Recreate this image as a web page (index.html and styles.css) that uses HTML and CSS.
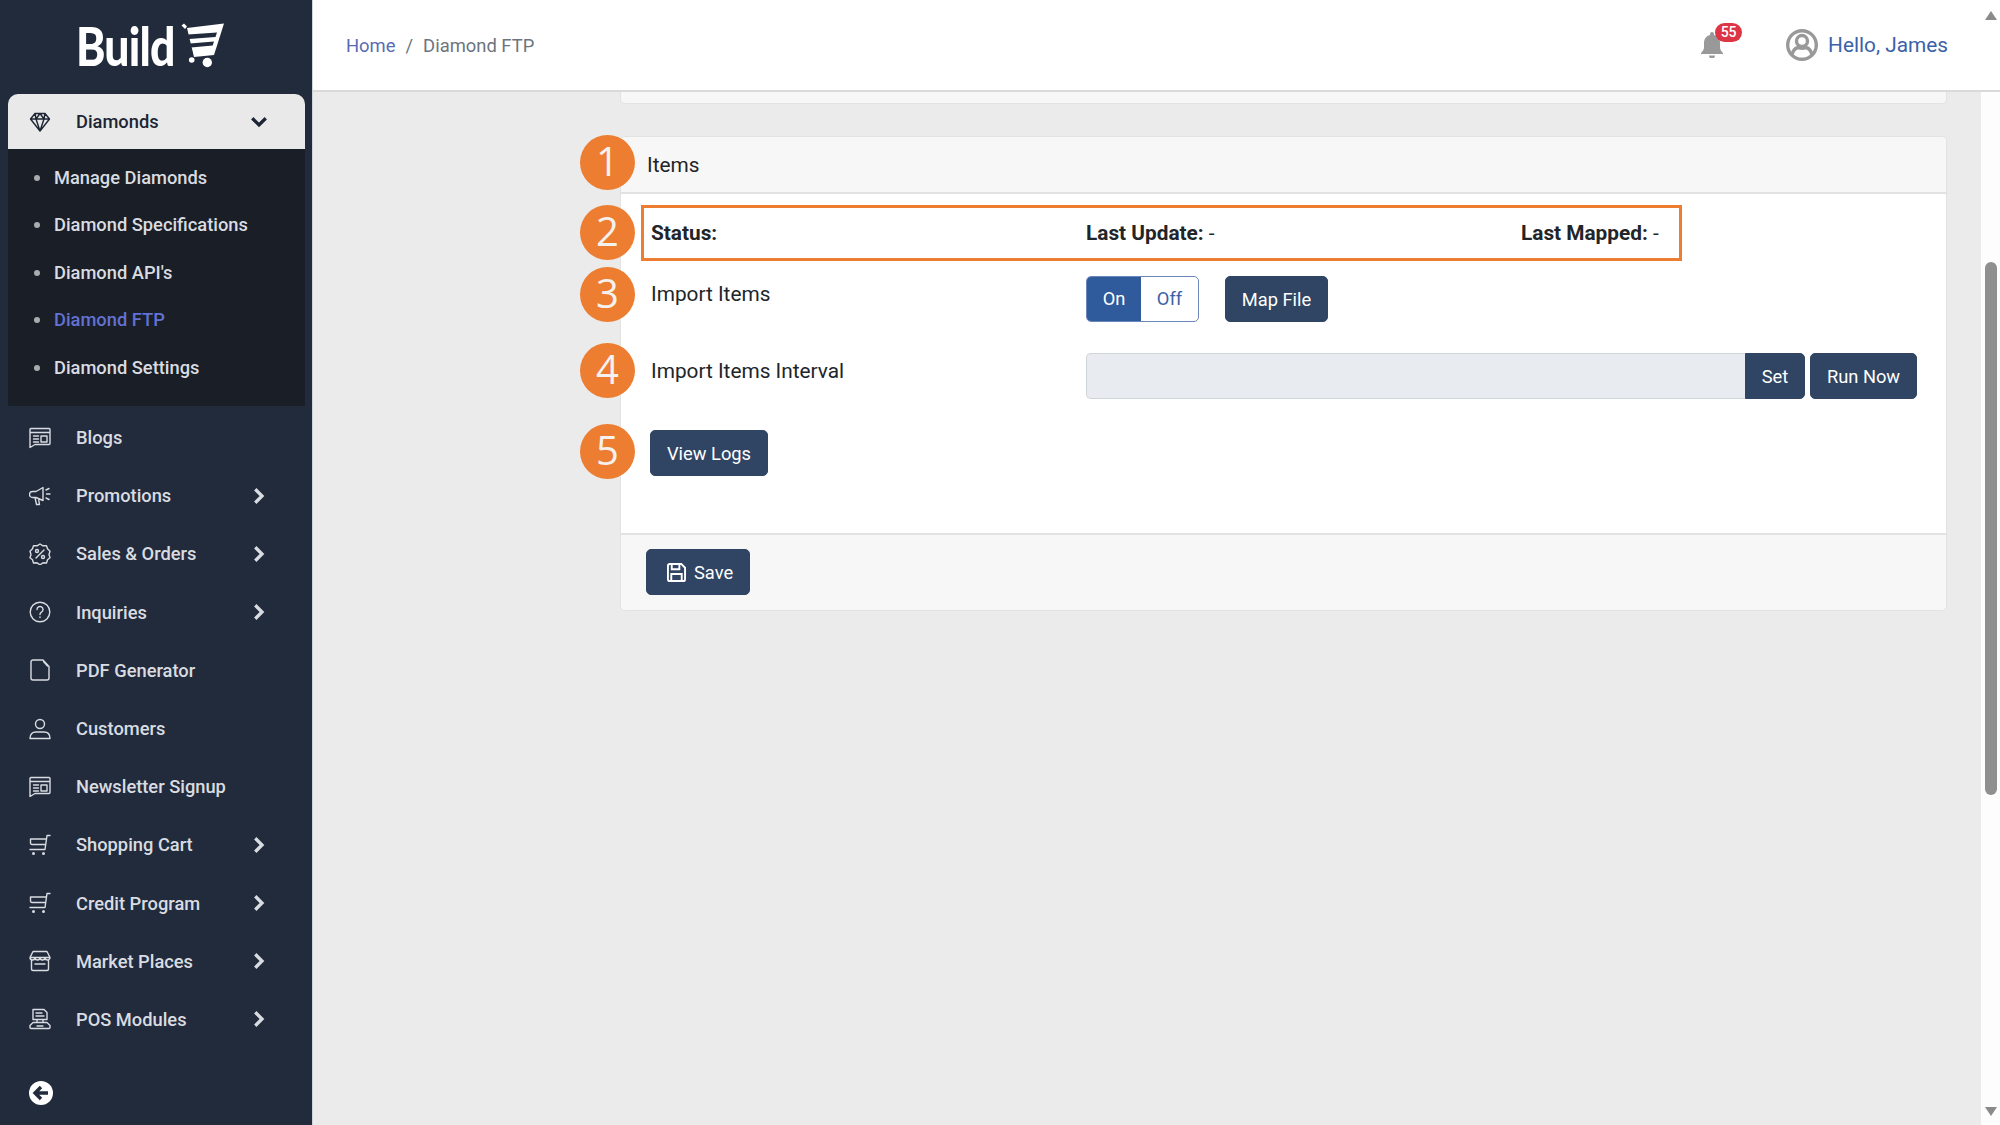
FILE: index.html
```html
<!DOCTYPE html>
<html lang="en">

<head>
  <meta charset="UTF-8">
  <meta name="viewport" content="width=device-width, initial-scale=1.0">
  <title>Diamond FTP</title>
  <link rel="stylesheet" href="styles.css">
</head>

<body>
  <svg class="c-sprite" width="0" height="0" aria-hidden="true">
    <symbol id="i-diamond" viewBox="0 0 22 22">
      <path d="M6 2.500h10l4.500 5.500L11 20 1.500 8z M1.500 8h19 M7 8l4 12 4-12 M6 2.500 7 8l4-5.500L15 8l1-5.500" />
    </symbol>
    <symbol id="i-news" viewBox="0 0 22 22">
      <path d="M1 2.500A1 1 0 0 1 2 1.500h18a1 1 0 0 1 1 1v14a1 1 0 0 1-1 1H6l-5 3z M1 5.500h20 M4.500 9h5 M4.500 12h5 M4.500 15h5 M12 9h6v6h-6z" />
    </symbol>
    <symbol id="i-promo" viewBox="0 0 22 22">
      <path d="M14 2.500 7 6.500H3.500a2.500 2.500 0 0 0 0 6H7l7 3z M6 12.500l1.500 7h3l-1-6 M17 5l3-1.500 M17.500 9H21 M17 13l3 1.500" />
    </symbol>
    <symbol id="i-percent" viewBox="0 0 22 22">
      <path d="M11 1l3 1.800 3.500-.2 1 3.200 2.500 2.500-1 3.200 1 3.200-2.500 2-1 3.300-3.500-.2-3 2-3-2-3.500.2-1-3.300-2.500-2 1-3.200-1-3.200 2.500-2.500 1-3.200 3.500.2z M7 15 15 7" />
      <circle cx="8" cy="8" r="1.500" />
      <circle cx="14" cy="14" r="1.500" />
    </symbol>
    <symbol id="i-help" viewBox="0 0 22 22">
      <circle cx="11" cy="11" r="9.800" />
      <path d="M8 8.500a3 3 0 1 1 4.500 2.600c-1 .6-1.500 1.200-1.500 2.400 M11 16v.5" />
    </symbol>
    <symbol id="i-file" viewBox="0 0 22 22">
      <path d="M2 3a2 2 0 0 1 2-2h10l6 6.500V19a2 2 0 0 1-2 2H4a2 2 0 0 1-2-2z M14.500 2.500l4 4.500" />
    </symbol>
    <symbol id="i-user" viewBox="0 0 22 22">
      <circle cx="11" cy="6" r="4.500" />
      <path d="M1 20.500c0-4 2-6.500 6-6.500h8c4 0 6 2.500 6 6.500z" />
    </symbol>
    <symbol id="i-cart" viewBox="0 0 22 22">
      <path d="M21 1.500h-3L16 15.500H1 M1.500 5h15.500 M16.800 10.500H3A1.500 1.500 0 0 1 1.500 9V5" />
      <circle cx="4.500" cy="19.500" r=".8" />
      <circle cx="14.500" cy="19.500" r=".8" />
    </symbol>
    <symbol id="i-store" viewBox="0 0 22 22">
      <path d="M4 1.500h14l3 6a2.500 2.500 0 0 1-5 0 2.500 2.500 0 0 1-5 0 2.500 2.500 0 0 1-5 0 2.500 2.500 0 0 1-5 0z M1 7.500h20 M2.500 10v9a1.500 1.500 0 0 0 1.500 1.500h14a1.500 1.500 0 0 0 1.500-1.500v-9 M6 14h10" />
    </symbol>
    <symbol id="i-pos" viewBox="0 0 22 22">
      <path d="M4 1.500h11l3 3v7H4z M7 5h6 M7 8h8 M8 11.500v3 M14 11.500v3 M4 14.500h14l3 3v2a1 1 0 0 1-1 1H2a1 1 0 0 1-1-1v-2z M8 18h6" />
    </symbol>
    <symbol id="i-chevron" viewBox="0 0 12 12">
      <path d="M3.500 1.500 8 6l-4.500 4.500" />
    </symbol>
  </svg>

  <div class="l-app">
    <aside class="c-sidebar">
      <a class="c-logo" href="#">
        <span class="c-logo__text">Build</span>
        <svg class="c-logo__cart" viewBox="0 0 46 46" width="46" height="46">
          <path d="M1.500 3.500 4 1.500l3 3-2 2.500z" />
          <path d="M7 6 44 1.500 34 33l-20 2z" />
          <path class="c-logo__cut" d="M8 12.500 37 10.500l-1.500 4.500L9 17z" />
          <path class="c-logo__cut" d="M10 21.500 34 19.500l-1.300 4L11 25.500z" />
          <circle cx="11.700" cy="38" r="2.800" />
          <circle cx="27.300" cy="40.500" r="4.700" />
        </svg>
      </a>

      <nav class="c-nav">
        <div class="c-nav__group">
          <a class="c-nav__item c-nav__item--open" href="#">
            <svg class="c-nav__icon"><use href="#i-diamond" /></svg>
            <span class="c-nav__label">Diamonds</span>
            <svg class="c-nav__arrow c-nav__arrow--down" viewBox="0 0 12 12"><use href="#i-chevron" /></svg>
          </a>
          <ul class="c-subnav">
            <li class="c-subnav__item">Manage Diamonds</li>
            <li class="c-subnav__item">Diamond Specifications</li>
            <li class="c-subnav__item">Diamond API's</li>
            <li class="c-subnav__item is-active">Diamond FTP</li>
            <li class="c-subnav__item">Diamond Settings</li>
          </ul>
        </div>

        <a class="c-nav__item" href="#">
          <svg class="c-nav__icon"><use href="#i-news" /></svg>
          <span class="c-nav__label">Blogs</span>
        </a>
        <a class="c-nav__item" href="#">
          <svg class="c-nav__icon"><use href="#i-promo" /></svg>
          <span class="c-nav__label">Promotions</span>
          <svg class="c-nav__arrow" viewBox="0 0 12 12"><use href="#i-chevron" /></svg>
        </a>
        <a class="c-nav__item" href="#">
          <svg class="c-nav__icon"><use href="#i-percent" /></svg>
          <span class="c-nav__label">Sales &amp; Orders</span>
          <svg class="c-nav__arrow" viewBox="0 0 12 12"><use href="#i-chevron" /></svg>
        </a>
        <a class="c-nav__item" href="#">
          <svg class="c-nav__icon"><use href="#i-help" /></svg>
          <span class="c-nav__label">Inquiries</span>
          <svg class="c-nav__arrow" viewBox="0 0 12 12"><use href="#i-chevron" /></svg>
        </a>
        <a class="c-nav__item" href="#">
          <svg class="c-nav__icon"><use href="#i-file" /></svg>
          <span class="c-nav__label">PDF Generator</span>
        </a>
        <a class="c-nav__item" href="#">
          <svg class="c-nav__icon"><use href="#i-user" /></svg>
          <span class="c-nav__label">Customers</span>
        </a>
        <a class="c-nav__item" href="#">
          <svg class="c-nav__icon"><use href="#i-news" /></svg>
          <span class="c-nav__label">Newsletter Signup</span>
        </a>
        <a class="c-nav__item" href="#">
          <svg class="c-nav__icon"><use href="#i-cart" /></svg>
          <span class="c-nav__label">Shopping Cart</span>
          <svg class="c-nav__arrow" viewBox="0 0 12 12"><use href="#i-chevron" /></svg>
        </a>
        <a class="c-nav__item" href="#">
          <svg class="c-nav__icon"><use href="#i-cart" /></svg>
          <span class="c-nav__label">Credit Program</span>
          <svg class="c-nav__arrow" viewBox="0 0 12 12"><use href="#i-chevron" /></svg>
        </a>
        <a class="c-nav__item" href="#">
          <svg class="c-nav__icon"><use href="#i-store" /></svg>
          <span class="c-nav__label">Market Places</span>
          <svg class="c-nav__arrow" viewBox="0 0 12 12"><use href="#i-chevron" /></svg>
        </a>
        <a class="c-nav__item" href="#">
          <svg class="c-nav__icon"><use href="#i-pos" /></svg>
          <span class="c-nav__label">POS Modules</span>
          <svg class="c-nav__arrow" viewBox="0 0 12 12"><use href="#i-chevron" /></svg>
        </a>
      </nav>

      <button class="c-collapse" type="button" aria-label="Collapse">
        <svg viewBox="0 0 24 24" width="24" height="24">
          <circle cx="12" cy="12" r="12" fill="#fff" />
          <path d="M19 12H7 M12 6l-6 6 6 6" fill="none" stroke="#222b3c" stroke-width="3.400" />
        </svg>
      </button>
    </aside>

    <div class="l-main">
      <header class="c-topbar">
        <div class="c-crumbs">
          <a class="c-crumbs__link" href="#">Home</a>
          <span class="c-crumbs__sep">/</span>
          <span class="c-crumbs__current">Diamond FTP</span>
        </div>
        <div class="c-bell">
          <svg viewBox="0 0 24 26" width="24" height="26">
            <path d="M12 0a2 2 0 0 1 2 2v1c4 1 6 4 6 8v4c0 3 1.500 4.500 3 6v1H1v-1c1.500-1.500 3-3 3-6v-4c0-4 2-7 6-8V2a2 2 0 0 1 2-2z M9 23.500h6a3 3 0 0 1-6 0z" fill="#999" />
          </svg>
          <span class="c-bell__badge">55</span>
        </div>
        <a class="c-account" href="#">
          <svg viewBox="0 0 32 32" width="32" height="32">
            <circle cx="16" cy="16" r="14.300" fill="none" stroke="#999" stroke-width="3.400" />
            <circle cx="16" cy="12" r="5.500" fill="none" stroke="#999" stroke-width="3.400" />
            <path d="M6 26c1-5 4-7 6-7.500 2.500 1 5.500 1 8 0 2 .5 5 2.500 6 7.500" fill="none" stroke="#999" stroke-width="3.400" />
          </svg>
          <span>Hello, James</span>
        </a>
      </header>

      <div class="l-body">
        <main class="l-content">
          <div class="c-card c-card--stub"></div>

          <section class="c-card">
            <h2 class="c-card__header">Items</h2>
            <div class="c-card__body">
              <div class="c-status">
                <strong class="c-status__cell">Status:</strong>
                <strong class="c-status__cell">Last Update: <span class="c-status__value">-</span></strong>
                <strong class="c-status__cell">Last Mapped: <span class="c-status__value">-</span></strong>
              </div>

              <div class="c-row c-row--import">
                <span class="c-row__label">Import Items</span>
                <div class="c-row__controls">
                  <div class="c-toggle">
                    <span class="c-toggle__opt is-on">On</span>
                    <span class="c-toggle__opt">Off</span>
                  </div>
                  <button class="c-btn c-btn--map" type="button">Map File</button>
                </div>
              </div>

              <div class="c-row c-row--interval">
                <span class="c-row__label">Import Items Interval</span>
                <div class="c-row__controls">
                  <div class="c-input-group">
                    <input class="c-input" type="text" disabled>
                    <button class="c-btn c-btn--set" type="button">Set</button>
                  </div>
                  <button class="c-btn c-btn--run" type="button">Run Now</button>
                </div>
              </div>

              <button class="c-btn c-btn--logs" type="button">View Logs</button>
            </div>
            <div class="c-card__footer">
              <button class="c-btn c-btn--save" type="button">
                <svg viewBox="0 0 20 20" width="19" height="19">
                  <path d="M1 3a2 2 0 0 1 2-2h12l4 4v12a2 2 0 0 1-2 2H3a2 2 0 0 1-2-2z M5 1.500v5h8v-5 M4.500 18.500v-7h11v7" fill="none" stroke="#fff" stroke-width="2" />
                </svg>
                Save
              </button>
            </div>

            <!-- callouts -->
            <span class="c-callout c-callout--1">1</span>
            <span class="c-callout c-callout--2">2</span>
            <span class="c-callout c-callout--3">3</span>
            <span class="c-callout c-callout--4">4</span>
            <span class="c-callout c-callout--5">5</span>
          </section>
        </main>

        <div class="c-scrollbar">
          <span class="c-scrollbar__up"></span>
          <span class="c-scrollbar__thumb"></span>
          <span class="c-scrollbar__down"></span>
        </div>
      </div>
    </div>
  </div>
</body>

</html>
```

FILE: styles.css
```css
*,
*::before,
*::after {
  margin: 0;
  padding: 0;
  box-sizing: border-box;
}

html,
body {
  height: 100%;
}

body {
  font-family: Roboto, "Liberation Sans", sans-serif;
  font-size: 20.800px;
  color: #212529;
  background: #fff;
  overflow: hidden;
}

a {
  text-decoration: none;
  color: inherit;
}

ul {
  list-style: none;
}

.c-sprite {
  position: absolute;
}

.l-app {
  display: flex;
  height: 1125px;
}

/* SIDEBAR */
.c-sidebar {
  width: 313px;
  flex: none;
  display: flex;
  flex-direction: column;
  background: #222b3c;
  border-right: 1px solid #cfd3da;
  color: #d9dce1;
}

.c-logo {
  height: 94px;
  flex: none;
  display: flex;
  align-items: flex-start;
  padding: 18px 0 0 76px;
  color: #fff;
}

.c-logo__text {
  width: 104px;
  font-family: Lato, sans-serif;
  font-weight: 900;
  font-size: 53px;
  line-height: 56px;
  letter-spacing: -1px;
  transform: scaleX(.84);
  transform-origin: left center;
}

.c-logo__cart {
  margin-top: 4px;
  fill: #fff;
}

.c-logo__cut {
  fill: #222b3c;
}

.c-nav {
  flex: none;
  padding: 0 7px 0 8px;
}

.c-nav__group {
  margin-bottom: 2.500px;
}

.c-nav__item {
  display: flex;
  align-items: center;
  height: 58.200px;
  font-size: 18.300px;
  font-weight: 500;
  padding-left: 21px;
}

.c-nav__item--open {
  height: 55px;
  background: #e9e9e9;
  color: #1d2534;
  border-radius: 10px 10px 0 0;
}

.c-nav__icon {
  width: 22px;
  height: 22px;
  flex: none;
  fill: none;
  stroke: currentColor;
  stroke-width: 1.400;
  stroke-linejoin: round;
  stroke-linecap: round;
}

.c-nav__label {
  margin-left: 25px;
  width: 171px;
  flex: none;
  white-space: nowrap;
}

.c-nav__arrow {
  width: 18px;
  height: 18px;
  margin-left: 3px;
  fill: none;
  stroke: currentColor;
  stroke-width: 2.200;
}

.c-nav__arrow--down {
  transform: rotate(90deg);
}

.c-subnav {
  background: #1a1e26;
  height: 257px;
  padding: 4.600px 0 0 37px;
}

.c-subnav__item {
  position: relative;
  height: 47.500px;
  line-height: 47.500px;
  padding-left: 9px;
  font-size: 18.300px;
  font-weight: 500;
}

.c-subnav__item::before {
  content: '';
  position: absolute;
  left: -11px;
  top: 21px;
  width: 6px;
  height: 6px;
  border-radius: 50%;
  background: #a9abae;
}

.c-subnav__item.is-active {
  color: #6272d4;
}

.c-collapse {
  border: 0;
  background: none;
  align-self: flex-start;
  display: flex;
  margin: auto 0 20px 29px;
}

/* MAIN */
.l-main {
  flex: 1;
  min-width: 0;
  display: flex;
  flex-direction: column;
}

.c-topbar {
  height: 92px;
  flex: none;
  display: flex;
  align-items: center;
  background: #fff;
  border-bottom: 2px solid #dadada;
  padding: 0 52px 0 33px;
}

.c-crumbs {
  display: flex;
  gap: 10px;
  font-size: 18.400px;
  margin-right: auto;
}

.c-crumbs__link {
  color: #5a6bb5;
}

.c-crumbs__sep,
.c-crumbs__current {
  color: #6c757d;
}

.c-bell {
  position: relative;
  display: flex;
  margin: 0 62px 0 0;
}

.c-bell__badge {
  position: absolute;
  left: 15px;
  top: -9px;
  width: 27px;
  height: 19px;
  border-radius: 10px;
  background: #dc3545;
  color: #fff;
  font-size: 14px;
  font-weight: 500;
  line-height: 19px;
  text-align: center;
}

.c-account {
  display: flex;
  align-items: center;
  gap: 10px;
  font-size: 20.800px;
  color: #3b62a8;
}

.l-body {
  flex: 1;
  min-height: 0;
  display: flex;
}

.l-content {
  flex: 1;
  min-width: 0;
  background: #ebebeb;
  padding: 0 34px 0 307px;
}

/* CARD */
.c-card {
  position: relative;
  background: #fff;
  border: 1px solid #e2e2e2;
  border-radius: 5px;
}

.c-card--stub {
  height: 12px;
  margin-bottom: 32px;
  background: #f7f7f7;
  border-top: 0;
  border-radius: 0 0 5px 5px;
}

.c-card__header {
  height: 57px;
  background: #f7f7f7;
  border-bottom: 2px solid #e2e2e2;
  border-radius: 5px 5px 0 0;
  font-size: 20.800px;
  font-weight: 400;
  line-height: 56px;
  padding-left: 26px;
}

.c-card__body {
  height: 339px;
  padding: 11px 0 0 20px;
}

.c-card__footer {
  height: 77px;
  background: #f7f7f7;
  border-top: 2px solid #e2e2e2;
  border-radius: 0 0 5px 5px;
  padding: 14px 0 0 25px;
}

.c-status {
  display: grid;
  grid-template-columns: 435px 435px 1fr;
  align-items: center;
  width: 1041px;
  height: 56px;
  border: 3px solid #ed7d31;
  padding-left: 7px;
}

.c-status__cell {
  font-weight: 700;
  white-space: nowrap;
}

.c-status__value {
  font-weight: 400;
}

.c-row {
  display: grid;
  grid-template-columns: 435px 1fr;
  padding-left: 10px;
}

.c-row--import {
  margin-top: 15px;
  height: 46px;
}

.c-row--interval {
  margin-top: 31px;
  height: 46px;
}

.c-row__label {
  line-height: 24px;
  margin-top: 6px;
  white-space: nowrap;
}

.c-row__controls {
  display: flex;
  align-items: flex-start;
}

.c-toggle {
  display: flex;
  width: 113px;
  height: 46px;
  border: 1px solid #6b86bb;
  border-radius: 5px;
  overflow: hidden;
  font-size: 18.300px;
  line-height: 44px;
  text-align: center;
  color: #3b62a8;
}

.c-toggle__opt {
  flex: 1;
}

.c-toggle__opt.is-on {
  flex: none;
  width: 54px;
  background: #2f5a9c;
  color: #fff;
}

.c-btn {
  height: 46px;
  background: #304564;
  border: 1px solid #304564;
  border-radius: 5px;
  color: #fff;
  font-family: inherit;
  font-size: 18.300px;
  font-weight: 400;
}

.c-btn--map {
  width: 103px;
  margin-left: 26px;
}

.c-input-group {
  display: flex;
  width: 719px;
}

.c-input {
  flex: 1;
  min-width: 0;
  height: 46px;
  background: #e8ebef;
  border: 1px solid #ced4da;
  border-right: 0;
  border-radius: 5px 0 0 5px;
}

.c-btn--set {
  width: 60px;
  border-radius: 0 5px 5px 0;
}

.c-btn--run {
  width: 107px;
  margin-left: 5px;
}

.c-btn--logs {
  display: block;
  width: 118px;
  margin: 31px 0 0 9px;
}

.c-btn--save {
  display: flex;
  align-items: center;
  gap: 8px;
  width: 104px;
  padding-left: 20px;
}

.c-callout {
  position: absolute;
  left: -41px;
  width: 55px;
  height: 55px;
  border-radius: 50%;
  background: #ed7d31;
  color: #f4f1ee;
  font-family: "Open Sans", sans-serif;
  font-size: 40px;
  line-height: 52px;
  text-align: center;
}

.c-callout--1 { top: -2px; }
.c-callout--2 { top: 68px; }
.c-callout--3 { top: 130px; }
.c-callout--4 { top: 206px; }
.c-callout--5 { top: 287px; }

/* SCROLLBAR */
.c-scrollbar {
  position: relative;
  width: 19px;
  flex: none;
  background: #fdfdfd;
}

.c-scrollbar__thumb {
  position: absolute;
  left: 4px;
  top: 170px;
  width: 12px;
  height: 533px;
  border-radius: 6px;
  background: #8f8f8f;
}

.c-scrollbar__up,
.c-scrollbar__down {
  position: absolute;
  left: 4px;
  width: 0;
  height: 0;
  border-left: 6.500px solid transparent;
  border-right: 6.500px solid transparent;
}

.c-scrollbar__up {
  top: -81px;
  border-bottom: 9px solid #8a8a8a;
}

.c-scrollbar__down {
  bottom: 9px;
  border-top: 9px solid #8a8a8a;
}
```
